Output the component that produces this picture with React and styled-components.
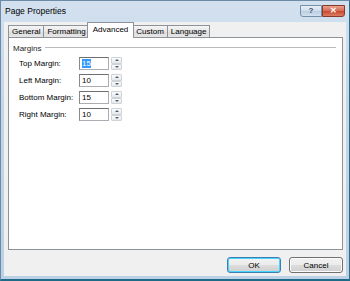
import React from 'react';
import styled, { createGlobalStyle } from 'styled-components';

const Global = createGlobalStyle`
  html, body { margin: 0; padding: 0; background: #fff; }
  body { font-family: "Liberation Sans", Arial, sans-serif; font-size: 8px; color: #000; }
`;

const Window = styled.div`
  width: 350px;
  height: 281px;
  box-sizing: border-box;
  display: flex;
  flex-direction: column;
  background: linear-gradient(#d3e1ef, #c2d5e9 40%, #bcd0e6);
  border: 1px solid #6d8aa6;
  border-bottom: 2px solid #1d6b86;
  border-right-color: #2d6d8c;
  padding: 0 3px 3px 3px;
  overflow: hidden;
`;

const TitleBar = styled.div`
  height: 21px;
  display: flex;
  align-items: flex-start;
  padding: 0 1px 0 1px;
  font-size: 8.5px;
`;

const Title = styled.span`
  flex: 1;
  margin-top: 5px;
`;

const CaptionButton = styled.div`
  width: ${(p) => p.$w}px;
  height: 12px;
  margin-top: 4px;
  box-sizing: border-box;
  border: 1px solid ${(p) => (p.$close ? '#8a3a2a' : '#7590ab')};
  border-radius: 0 0 ${(p) => (p.$close ? '3px' : '0')} ${(p) => (p.$close ? '0' : '3px')};
  background: ${(p) =>
    p.$close
      ? 'linear-gradient(#eaa28f, #d66a50 50%, #c7482f 51%, #dc7b60)'
      : 'linear-gradient(#eaf1f8, #cddbea 50%, #b9cce1 51%, #d3e1ee)'};
  display: flex;
  align-items: center;
  justify-content: center;
  color: ${(p) => (p.$close ? '#fff' : '#3b4f66')};
  font-weight: bold;
  font-size: 8px;
  line-height: 1;
`;

const Body = styled.div`
  flex: 1;
  background: #f0f0f0;
  display: flex;
  flex-direction: column;
  padding: 0 3px 0 4px;
`;

const TabStrip = styled.div`
  display: flex;
  align-items: flex-end;
  height: 15px;
  position: relative;
  z-index: 1;
`;

const Tab = styled.div`
  height: ${(p) => (p.$active ? '16px' : '12px')};
  box-sizing: border-box;
  padding: ${(p) => (p.$active ? '2px 5px 0 5px' : '1px 3px 0 3px')};
  border: 1px solid #8e9299;
  border-bottom: 0;
  margin: ${(p) => (p.$active ? '0 -2px -1px -2px' : '0 -1px 0 0')};
  background: ${(p) => (p.$active ? '#fff' : 'linear-gradient(#f5f5f5, #e6e6e6 50%, #dcdcdc 51%, #e6e6e6)')};
  line-height: 9px;
  white-space: nowrap;
  position: relative;
  z-index: ${(p) => (p.$active ? 2 : 1)};
`;

const Panel = styled.div`
  height: 213px;
  box-sizing: border-box;
  background: #fff;
  border: 1px solid #8e9299;
  padding: 5px 6px 0 4px;
`;

const GroupHeader = styled.div`
  display: flex;
  align-items: center;
  height: 10px;
  gap: 4px;
  color: #1e1e1e;
`;

const GroupLine = styled.div`
  flex: 1;
  height: 0;
  border-top: 1px solid #b9b9b9;
  border-bottom: 1px solid #fff;
`;

const Rows = styled.div`
  display: flex;
  flex-direction: column;
  gap: 4px;
  padding: 4px 0 0 6px;
`;

const Row = styled.div`
  display: flex;
  align-items: center;
  height: 13px;
`;

const Label = styled.span`
  width: 60px;
  white-space: nowrap;
`;

const Input = styled.div`
  width: 30px;
  height: 13px;
  box-sizing: border-box;
  border: 1px solid #abadb3;
  border-top-color: #6f6f6f;
  border-left-color: #8a8a8a;
  padding-left: 2px;
  display: flex;
  align-items: center;
`;

const Selected = styled.span`
  background: #3399ff;
  color: #fff;
  line-height: 9px;
`;

const Spinner = styled.div`
  width: 11px;
  height: 13px;
  margin-left: 2px;
  display: flex;
  flex-direction: column;
`;

const SpinHalf = styled.div`
  flex: 1;
  box-sizing: border-box;
  border: 1px solid #cfd3d8;
  border-radius: 1px;
  background: linear-gradient(#fafbfc, #e6e9ec);
  display: flex;
  align-items: center;
  justify-content: center;
  &::after {
    content: '';
    border-left: 2px solid transparent;
    border-right: 2px solid transparent;
    ${(p) => (p.$up ? 'border-bottom: 2px solid #4d6078;' : 'border-top: 2px solid #4d6078;')}
  }
`;

const Footer = styled.div`
  flex: 1;
  display: flex;
  justify-content: flex-end;
  align-items: flex-start;
  gap: 8px;
  padding-top: 7px;
`;

const Button = styled.div`
  width: ${(p) => p.$w}px;
  height: 16px;
  box-sizing: border-box;
  border: 1px solid ${(p) => (p.$default ? '#3c7fb1' : '#707070')};
  border-radius: 3px;
  background: linear-gradient(#f2f2f2, #ebebeb 50%, #dddddd 51%, #cfcfcf);
  box-shadow: ${(p) => (p.$default ? 'inset 0 0 0 1px #48d4fe' : 'inset 0 0 0 1px #fbfbfb')};
  display: flex;
  align-items: center;
  justify-content: center;
`;

const SpinBox = ({ value, selected }) => (
  <>
    <Input>{selected ? <Selected>{value}</Selected> : value}</Input>
    <Spinner>
      <SpinHalf $up />
      <SpinHalf />
    </Spinner>
  </>
);

const rows = [
  { label: 'Top Margin:', value: '15', selected: true },
  { label: 'Left Margin:', value: '10' },
  { label: 'Bottom Margin:', value: '15' },
  { label: 'Right Margin:', value: '10' },
];

const tabs = ['General', 'Formatting', 'Advanced', 'Custom', 'Language'];

export default function App() {
  return (
    <>
      <Global />
      <Window>
        <TitleBar>
          <Title>Page Properties</Title>
          <CaptionButton $w={22}>?</CaptionButton>
          <CaptionButton $w={23} $close>✕</CaptionButton>
        </TitleBar>
        <Body>
          <TabStrip>
            {tabs.map((t) => (
              <Tab key={t} $active={t === 'Advanced'}>
                {t}
              </Tab>
            ))}
          </TabStrip>
          <Panel>
            <GroupHeader>
              <span>Margins</span>
              <GroupLine />
            </GroupHeader>
            <Rows>
              {rows.map((r) => (
                <Row key={r.label}>
                  <Label>{r.label}</Label>
                  <SpinBox value={r.value} selected={r.selected} />
                </Row>
              ))}
            </Rows>
          </Panel>
          <Footer>
            <Button $w={54} $default>OK</Button>
            <Button $w={54}>Cancel</Button>
          </Footer>
        </Body>
      </Window>
    </>
  );
}
